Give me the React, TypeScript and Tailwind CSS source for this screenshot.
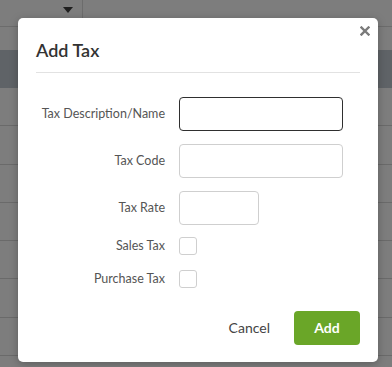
import React from 'react';

const rows = [0, 1, 2, 3, 4, 5, 6];

function CloseIcon() {
  return (
    <svg width="10" height="10" viewBox="0 0 10 10" className="block">
      <path d="M1.5 1.5 L8.5 8.5 M8.5 1.5 L1.5 8.5" stroke="#7a7a7a" strokeWidth="2.4" strokeLinecap="square" />
    </svg>
  );
}

function Field({ label, width, focused }: { label: string; width: string; focused?: boolean }) {
  return (
    <div className="flex items-center">
      <label className="w-[129px] text-right text-[12.5px] text-[#555]">{label}</label>
      <div
        className={`ml-[14px] h-[34px] rounded-[4px] border bg-white ${width} ${
          focused ? 'border-[#2f2f2f]' : 'border-[#cfcfcf]'
        }`}
      />
    </div>
  );
}

function CheckRow({ label }: { label: string }) {
  return (
    <div className="flex items-center">
      <label className="w-[129px] text-right text-[12.5px] text-[#555]">{label}</label>
      <div className="ml-[14px] w-[18px] h-[18px] rounded-[3px] border border-[#cfcfcf] bg-white" />
    </div>
  );
}

export default function App() {
  return (
    <div
      className="relative w-[392px] h-[367px] overflow-hidden bg-[#7d7d7d]"
      style={{ fontFamily: 'Lato, "Open Sans", Arial, sans-serif' }}
    >
      {/* page behind the overlay */}
      <div className="h-[27px] flex border-b border-[#6c6c6c]">
        <div className="w-[83px] border-r border-[#6c6c6c] flex justify-end items-start pt-[7px] pr-[9px]">
          <div className="w-0 h-0 border-l-[5px] border-r-[5px] border-t-[6px] border-l-transparent border-r-transparent border-t-[#1f1f1f]" />
        </div>
      </div>
      <div className="h-[23px]" />
      <div className="h-[38px] bg-[#5f6367]" />
      {rows.map((r) => (
        <div key={r} className="h-[38.3px] border-b border-[#6a6a6a]" />
      ))}

      {/* modal */}
      <div className="absolute left-[18px] top-[18px] w-[360px] h-[344px] bg-white rounded-[5px] shadow-[0_2px_8px_rgba(0,0,0,0.25)] px-[18px]">
        <button className="absolute top-[8px] right-[8px]">
          <CloseIcon />
        </button>
        <h2 className="pt-[21px] pb-[11px] text-[18px] leading-[22px] text-[#333] font-semibold border-b border-[#e2e2e2]">
          Add Tax
        </h2>

        <div className="mt-[24px] flex flex-col gap-[13px]">
          <Field label="Tax Description/Name" width="w-[164px]" focused />
          <Field label="Tax Code" width="w-[164px]" />
          <Field label="Tax Rate" width="w-[80px]" />
        </div>

        <div className="mt-[12px] flex flex-col gap-[14px]">
          <CheckRow label="Sales Tax" />
          <CheckRow label="Purchase Tax" />
        </div>

        <div className="mt-[22px] flex justify-end items-center gap-[24px]">
          <button className="text-[14px] text-[#444]">Cancel</button>
          <button className="w-[66px] h-[34px] rounded-[4px] bg-[#6aa628] text-white text-[14px] font-bold">
            Add
          </button>
        </div>
      </div>
    </div>
  );
}
